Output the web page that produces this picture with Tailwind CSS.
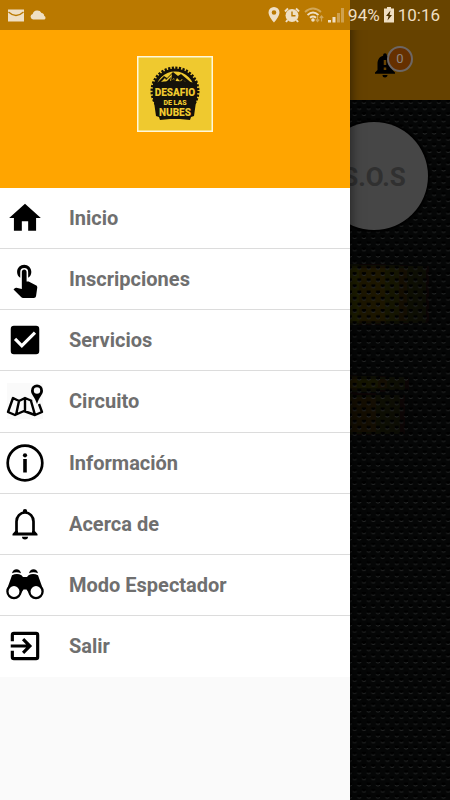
<!DOCTYPE html>
<html lang="es">
<head>
<meta charset="utf-8">
<meta name="viewport" content="width=device-width, initial-scale=1">
<title>Desafío de las Nubes</title>
<script src="https://cdn.jsdelivr.net/npm/@tailwindcss/browser@4"></script>
</head>
<body class="relative min-h-screen overflow-hidden bg-[#050606] font-['Roboto',sans-serif]">

<!-- Main screen, dimmed behind the drawer -->
<main class="relative flex min-h-screen flex-col">
  <svg class="absolute inset-0 h-full w-full" aria-hidden="true">
    <defs>
      <pattern id="mesh" width="9.36" height="12.3" patternUnits="userSpaceOnUse" x="350" y="99">
        <path d="M2.6 1h4v2.400q-2 1.800-4 0zM-2 7.200h3.900v2.400q-2 1.800-3.900 0zM7.300 7.200h4v2.400q-2 1.800-4 0z" fill="#000"/>
        <path d="M2.600 3.600q2 1.500 4 0M-2 9.800q2 1.500 3.900 0M7.300 9.800q2 1.500 4 0" fill="none" stroke="#2a2c2c" stroke-width=".9"/>
      </pattern>
      <linearGradient id="glow"><stop offset="0" stop-color="#221d05"/><stop offset=".45" stop-color="#1b1705"/><stop offset="1" stop-color="#1b1705" stop-opacity="0"/></linearGradient>
      <filter id="soft"><feGaussianBlur stdDeviation="2"/></filter>
    </defs>
    <g fill="url(#glow)" filter="url(#soft)">
      <rect x="330" y="266" width="110" height="57"/>
      <rect x="330" y="377" width="90" height="13" opacity=".8"/>
      <rect x="330" y="395" width="90" height="39" opacity=".6"/>
    </g>
    <rect width="100%" height="100%" fill="url(#mesh)"/>
  </svg>
  <header class="relative flex h-[100px] items-center justify-end bg-[#664200] pt-[30px] pr-[50px]">
    <button class="relative" aria-label="Notificaciones">
      <svg class="block h-[30px] w-[30px]" viewBox="0 0 24 24" aria-hidden="true"><path d="M12 22c1.100 0 2-.9 2-2h-4a2 2 0 0 0 2 2zm6-6v-5c0-3.070-1.640-5.640-4.500-6.320V4a1.500 1.500 0 0 0-3 0v.68C7.630 5.360 6 7.920 6 11v5l-2 2v1h16v-1zm-5 0h-2v-2h2zm0-4h-2V8h2z"/></svg>
      <span class="absolute -top-[4px] left-[17px] flex h-[26px] w-[26px] items-center justify-center rounded-full border-2 border-[#6c6664] bg-[#663000] text-[13px] text-[#8c8580]">0</span>
    </button>
  </header>
  <button class="relative mt-[22px] mr-[22px] flex h-[108px] w-[108px] items-center justify-center self-end rounded-full bg-[#464646] pt-[3px] text-[26px] font-bold text-[#303030] shadow-[0_0_2px_2px_#000]">S.O.S</button>
</main>

<!-- Navigation drawer -->
<aside class="absolute inset-y-0 left-0 w-[350px] bg-[#fafafa] shadow-[0_0_12px_rgba(0,0,0,0.6)]">
  <div class="flex h-[188px] items-start justify-center bg-[#ffa500] pt-[56px]">
    <svg class="block h-[76px] w-[76px]" viewBox="0 0 76 76" role="img" aria-label="Desafío de las Nubes">
      <rect x=".75" y=".75" width="74.500" height="74.500" fill="#efc92f" stroke="#fff8dc" stroke-width="1.500"/>
      <circle cx="38" cy="35" r="23" fill="none" stroke="#15120a" stroke-width="3" stroke-dasharray="2.200 1.400"/>
      <circle cx="38" cy="35" r="21" fill="none" stroke="#15120a" stroke-width="3"/>
      <path d="M19 28l8-8 3 2 6-6 5 4 3-2 13 11v4H19z" fill="#15120a"/>
      <path d="M24 26l4-4 1 2 6-6-1 7 3-3 1 4 2-4 3 3 2-2 5 4z" fill="#efc92f"/>
      <path d="M29 26l5-5-1 4 4-2 2 3zM43 26l3-3 2 3z" fill="#15120a"/>
      <path d="M16 27q22-4 44 0v16l-1 3-2 14-3 1-1 3-10-1h-10l-10 1-1-3-3-1-2-14-1-3z" fill="#15120a"/>
      <g fill="#efc92f" text-anchor="middle" font-family="Roboto, sans-serif" font-weight="900">
        <text x="38" y="40" font-size="10">DESAFIO</text>
        <text x="38" y="49" font-size="7">DE LAS</text>
        <text x="38" y="60" font-size="10">NUBES</text>
      </g>
    </svg>
  </div>
  <nav aria-label="Menú principal">
    <ul class="grid h-[489px] auto-rows-fr divide-y divide-[#dcdcdc] bg-white text-[20px] font-bold text-[#6f6f6f]">
      <li><a href="#inicio" class="flex h-full items-center gap-[25px] pl-[6px]">
        <svg class="h-[38px] w-[38px] text-black" viewBox="0 0 24 24" fill="currentColor" aria-hidden="true"><path d="M10 20v-6h4v6h5v-8h3L12 3 2 12h3v8z"/></svg>Inicio</a></li>
      <li><a href="#inscripciones" class="flex h-full items-center gap-[25px] pl-[6px]">
        <svg class="h-[38px] w-[38px] text-black" viewBox="0 0 24 24" fill="currentColor" aria-hidden="true"><path d="M9 11.240V7.500a2.500 2.500 0 0 1 5 0v3.740c1.210-.81 2-2.180 2-3.740C16 5.010 13.990 3 11.500 3S7 5.010 7 7.500c0 1.560.79 2.930 2 3.740zm9.840 4.630l-4.540-2.260c-.17-.07-.35-.11-.54-.11H13v-6c0-.83-.67-1.500-1.500-1.500S10 6.670 10 7.500v10.740l-3.430-.72c-.08-.01-.15-.03-.24-.03-.31 0-.59.13-.79.33l-.79.8 4.940 4.940c.27.27.65.44 1.060.44h6.790c.75 0 1.330-.55 1.440-1.280l.75-5.270c.01-.07.02-.14.02-.2 0-.62-.38-1.160-.91-1.380z"/></svg>Inscripciones</a></li>
      <li><a href="#servicios" class="flex h-full items-center gap-[25px] pl-[6px]">
        <svg class="h-[38px] w-[38px] text-black" viewBox="0 0 24 24" fill="currentColor" aria-hidden="true"><path d="M19 3H5a2 2 0 0 0-2 2v14a2 2 0 0 0 2 2h14a2 2 0 0 0 2-2V5a2 2 0 0 0-2-2zm-9 14l-5-5 1.410-1.410L10 14.170l7.590-7.590L19 8z"/></svg>Servicios</a></li>
      <li><a href="#circuito" class="flex h-full items-center gap-[25px] pl-[6px]">
        <svg class="h-[38px] w-[38px] text-black" viewBox="0 0 38 38" aria-hidden="true"><path fill="#fafafa" d="M1 1h36v36H1z"/><path d="M26 19l-7-3-6 3-6-3-5 14 7 3 9-4 11 4 7-3-3-8M13 19l-3 14M19 16v13M25 19l4 14" fill="none" stroke="currentColor" stroke-width="2.400" stroke-linejoin="round"/><path d="M31 2.500a6 6 0 0 0-6 6.200c0 4 4 6.300 6 13.300 2-7 6-9.300 6-13.300a6 6 0 0 0-6-6.200zm0 2.800a3.200 3.200 0 1 1 0 6.400 3.200 3.200 0 0 1 0-6.400z" fill="currentColor"/></svg>Circuito</a></li>
      <li><a href="#informacion" class="flex h-full items-center gap-[25px] pl-[6px]">
        <svg class="h-[38px] w-[38px] text-black" viewBox="0 0 38 38" aria-hidden="true"><circle cx="19" cy="19" r="17.300" fill="none" stroke="currentColor" stroke-width="2.700"/><circle cx="19" cy="11.300" r="2.100" fill="currentColor"/><path d="M17.200 15h3.600v13.500h-3.600z" fill="currentColor"/></svg>Información</a></li>
      <li><a href="#acerca-de" class="flex h-full items-center gap-[25px] pl-[6px]">
        <svg class="h-[38px] w-[38px] text-black" viewBox="0 0 38 38" aria-hidden="true"><path d="M10.500 28V16.500a8.500 9 0 0 1 17 0V28" fill="none" stroke="currentColor" stroke-width="2.700"/><path d="M16.800 8V6.200a2.200 2.200 0 0 1 4.400 0V8zM9.200 26h19.600l2.700 3v1.500h-25V29zM16 31.800h6a3 2.600 0 0 1-6 0z" fill="currentColor"/><path d="M12 25h14v2.500H12z" fill="#fff"/></svg>Acerca de</a></li>
      <li><a href="#modo-espectador" class="flex h-full items-center gap-[25px] pl-[6px]">
        <svg class="h-[38px] w-[38px] text-black" viewBox="0 0 38 38" aria-hidden="true"><path d="M6 7.200q1-4 4.500-4t4.500 4q-4.500-2-9 0zM23 7.200q1-4 4.500-4t4.500 4q-4.500-2-9 0zM6 9.200q5-2.500 9.500 0l1.500 1.800h4l1.500-1.800q4.500-2.500 9.500 0l5 14-7 4-7 0-2.500-3.700h-3l-2.500 3.700-7 0-7-4z" fill="currentColor"/><g fill="#fff" stroke="currentColor" stroke-width="2.300"><circle cx="8" cy="25.500" r="6.600"/><circle cx="30" cy="25.500" r="6.600"/></g></svg>Modo Espectador</a></li>
      <li><a href="#salir" class="flex h-full items-center gap-[25px] pl-[6px]">
        <svg class="h-[38px] w-[38px] text-black" viewBox="0 0 24 24" fill="currentColor" aria-hidden="true"><path d="M10.090 15.590L11.500 17l5-5-5-5-1.410 1.410L12.670 11H3v2h9.670zM19 3H5a2 2 0 0 0-2 2v4h2V5h14v14H5v-4H3v4a2 2 0 0 0 2 2h14a2 2 0 0 0 2-2V5a2 2 0 0 0-2-2z"/></svg>Salir</a></li>
    </ul>
  </nav>
</aside>

<!-- System status bar -->
<div class="absolute inset-x-0 top-0 flex h-[30px] items-center justify-between bg-linear-to-r from-[#ba7900] from-[350px] to-[#684400] to-[350px] pr-[10px] pl-[8px] text-[#efdfc4]">
  <div class="flex items-center gap-[6px]">
    <svg class="h-[13px] w-[16px]" viewBox="0 0 16 13" aria-hidden="true"><path d="M0 .5h16v12H0z" fill="currentColor"/><path d="M.5 3q7.500 7 15 0" fill="none" stroke="#ba7900" stroke-width="1.300"/></svg>
    <svg class="h-[10px] w-[17px]" viewBox="0 0 17 10" fill="currentColor" aria-hidden="true"><path d="M3 9.500a2.800 2.800 0 0 1-.3-5.500A4.800 4.800 0 0 1 11.500 3a3 3 0 0 1 2.700 3 1.900 1.900 0 0 1 .3 3.500z"/></svg>
  </div>
  <div class="flex items-center gap-[4px]">
    <svg class="h-[16px] w-[12px]" viewBox="0 0 12 16" fill="currentColor" aria-hidden="true"><path d="M6 0a5.500 5.500 0 0 0-5.500 5.500C.5 9.500 6 15.500 6 15.500s5.500-6 5.500-10A5.500 5.500 0 0 0 6 0zm0 3.200a2.300 2.300 0 1 1 0 4.600 2.300 2.300 0 0 1 0-4.600z"/></svg>
    <svg class="h-[16px] w-[16px]" viewBox="0 0 16 16" aria-hidden="true"><path d="M1 4.500L4 1.500M15 4.500l-3-3M3.500 13L2 15M12.500 13l1.500 2" stroke="currentColor" stroke-width="2"/><circle cx="8" cy="8.500" r="6.500" fill="currentColor"/><path d="M8 4.500v4.300h3.500" fill="none" stroke="#ba7900" stroke-width="1.400"/></svg>
    <svg class="h-[16px] w-[20px]" viewBox="0 0 20 16" fill="none" stroke="currentColor" stroke-width="1.800" aria-hidden="true"><path d="M1 5q8-7 16 0" opacity=".45"/><path d="M3.500 8q5.500-5 11 0M6 10.800q3-2.500 6 0"/><circle cx="9" cy="13" r=".9" fill="currentColor"/><path d="M13.500 9v5M11.800 12.500l1.700 2 1.700-2M17.500 14.500v-5M15.800 11l1.700-2 1.700 2" opacity=".45" stroke-width="1.200"/></svg>
    <svg class="h-[16px] w-[16px]" viewBox="0 0 16 16" fill="currentColor" aria-hidden="true"><path d="M0 13h3v2.500H0zM4.500 10h3v5.500h-3z"/><path d="M9 6h3v9.500H9zM13 1h3v14.500h-3z" opacity=".4"/></svg>
    <span class="text-[17px] leading-none">94%</span>
    <svg class="h-[16px] w-[10px]" viewBox="0 0 10 16" aria-hidden="true"><path d="M3 0h4v1.500h3v14H0v-14h3z" fill="currentColor"/><path d="M6.500 3.500L2 9h2.500L3.500 13.500 8 8H5.500z" fill="#4a3000"/></svg>
    <span class="text-[17px] leading-none">10:16</span>
  </div>
</div>
</body>
</html>
